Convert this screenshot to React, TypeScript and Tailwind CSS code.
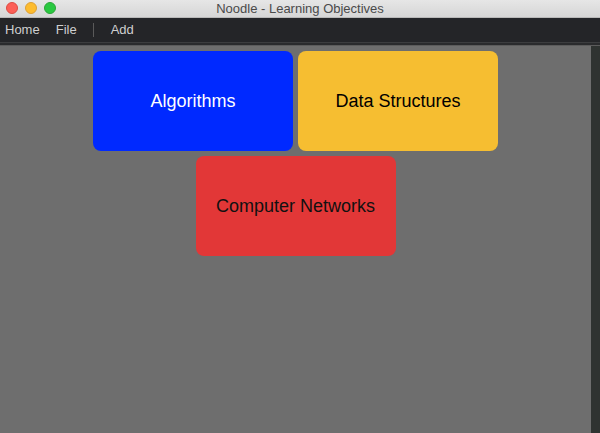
const cards = [
  { label: "Algorithms", bg: "bg-[#0029ff]", text: "text-white" },
  { label: "Data Structures", bg: "bg-[#f6be31]", text: "text-black" },
  { label: "Computer Networks", bg: "bg-[#e23737]", text: "text-[#111]" },
];

export default function App() {
  return (
    <div className="flex h-[433px] w-[600px] flex-col overflow-hidden bg-[#6e6e6e] font-['Liberation_Sans',Arial,sans-serif]">
      {/* title bar */}
      <div className="relative flex h-[18px] items-center justify-center border-b border-[#b9b9b9] bg-gradient-to-b from-[#e6e6e6] to-[#d6d6d6]">
        <div className="absolute left-[6px] top-[2px] flex gap-[7px]">
          <span className="h-[12px] w-[12px] rounded-full border border-[#dd4b42] bg-[#fc5f57]" />
          <span className="h-[12px] w-[12px] rounded-full border border-[#dea033] bg-[#fdbc2e]" />
          <span className="h-[12px] w-[12px] rounded-full border border-[#2aa536] bg-[#29c840]" />
        </div>
        <span className="text-[13px] leading-none text-[#4a4a4a]">
          Noodle - Learning Objectives
        </span>
      </div>

      {/* menu bar */}
      <div className="flex h-[24px] items-center bg-[#242528] text-[13px] text-[#cfcfcf]">
        <span className="ml-[5px]">Home</span>
        <span className="ml-[16px]">File</span>
        <span className="ml-[16px] h-[14px] w-px bg-[#5a5a5a]" />
        <span className="ml-[17px]">Add</span>
      </div>
      <div className="h-px bg-[#3c3d3f]" />
      <div className="h-[2px] bg-[#2a2b2d]" />
      <div className="h-px bg-[#5c5c5c]" />

      {/* content */}
      <div className="flex flex-1">
        <div className="flex flex-1 flex-wrap content-start justify-center gap-[5px] pt-[5px]">
          {cards.map((card) => (
            <div
              key={card.label}
              className={`flex h-[100px] w-[200px] items-center justify-center rounded-[8px] text-[18px] ${card.bg} ${card.text}`}
            >
              {card.label}
            </div>
          ))}
        </div>
        <div className="w-[9px] bg-[#2f3331]" />
      </div>
    </div>
  );
}
